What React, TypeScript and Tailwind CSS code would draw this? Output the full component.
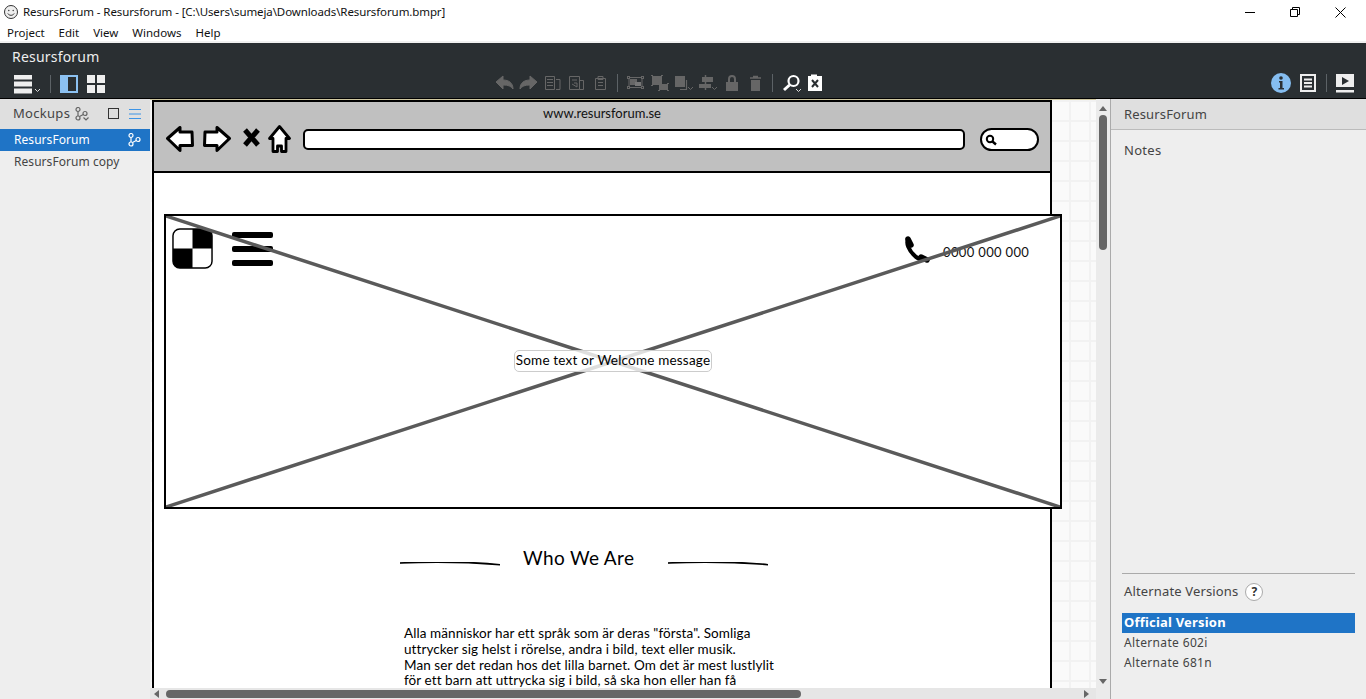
const UI = "font-['Noto_Sans','Open_Sans',sans-serif]";
const SKETCH = "font-['Lato','Open_Sans',sans-serif]";

const Chevron = ({ x, y, c = "#ddd" }: { x: number; y: number; c?: string }) => (
  <path d={`M${x} ${y}l2.5 2.5 2.5-2.5`} stroke={c} fill="none" />
);

const BranchIcon = ({ color, chevron }: { color: string; chevron?: boolean }) => (
  <svg width="14" height="14" viewBox="0 0 14 14" fill="none" stroke={color} strokeWidth="1.2">
    <circle cx="3" cy="2.500" r="2" />
    <circle cx="3" cy="11" r="2" />
    <circle cx="10" cy="6.500" r="2" />
    <path d="M3 4.500v4.500M4.500 9.500l3.800-2" />
    {chevron && <Chevron x={8.500} y={10.500} c={color} />}
  </svg>
);

const Sep = () => <div className="w-px h-[18px] bg-[#5c6266]" />;

const TitleBar = () => (
  <div className="h-6 bg-white flex items-center pl-[3px] pr-5">
    <svg width="16" height="16" viewBox="0 0 16 16" fill="none" stroke="#333">
      <circle cx="8" cy="8" r="6.5" fill="#eee" />
      <circle cx="5.8" cy="6.5" r=".7" fill="#333" stroke="none" />
      <circle cx="10.2" cy="6.5" r=".7" fill="#333" stroke="none" />
      <path d="M4.8 9.5c1.5 2.4 4.9 2.4 6.4 0" />
    </svg>
    <span className={`${UI} ml-1 text-[11.500px] tracking-[-0.1px] text-[#111] whitespace-nowrap`}>
      ResursForum - Resursforum - [C:\Users\sumeja\Downloads\Resursforum.bmpr]
    </span>
    <div className="ml-auto flex items-center gap-[35px]">
      <svg width="10" height="10" viewBox="0 0 10 10" stroke="#000" fill="none"><path d="M0 5.5h10" /></svg>
      <svg width="10" height="10" viewBox="0 0 10 10" stroke="#000" fill="none">
        <path d="M.5 2.5h7v7h-7zM2.5 2.5v-2h7v7h-2" />
      </svg>
      <svg width="11" height="11" viewBox="0 0 11 11" stroke="#000" fill="none"><path d="M.5.5l10 10M10.5.5l-10 10" /></svg>
    </div>
  </div>
);

const MenuBar = () => (
  <div className={`${UI} h-[17px] bg-white flex items-center pl-[7px] gap-[14px] text-[11.500px] text-[#111]`}>
    <span>Project</span>
    <span>Edit</span>
    <span>View</span>
    <span>Windows</span>
    <span>Help</span>
  </div>
);

const Gray = "#666";

const CenterTools = () => (
  <div className="absolute left-[496px] top-[31px] flex items-center h-5">
    <svg width="327" height="20" viewBox="496 74 327 20" fill="none" stroke={Gray}>
      {/* undo, redo */}
      <path d="M496 82l7-6v4c6 0 10 3 10 9-2-3-5-4-10-4v4z" fill={Gray} />
      <path d="M537 82l-7-6v4c-6 0-10 3-10 9 2-3 5-4 10-4v4z" fill={Gray} />
      {/* copy, cut, paste */}
      <path d="M545.500 76.500h9v13h-9zM547 79.500h6M547 82.500h6M547 85.500h6M556 79.500h4v10h-4" />
      <path d="M569.500 76.500h10v13h-10zM579.500 80.500h4v9h-4M572 80h5M572 84l5 3v-4h-3" />
      <path d="M595.500 78.500h10v11h-10zM598 76.500h5v3h-5zM598 82.500h5M598 85.500h5" />
      {/* group */}
      <path d="M629 77.500h13v10h-13z" />
      <rect x="627.500" y="76.500" width="2" height="2" fill="#2a2f32" />
      <rect x="641.500" y="76.500" width="2" height="2" fill="#2a2f32" />
      <rect x="627.500" y="86.500" width="2" height="2" fill="#2a2f32" />
      <rect x="641.500" y="86.500" width="2" height="2" fill="#2a2f32" />
      <rect x="630" y="79" width="7" height="6" fill={Gray} stroke="none" />
      <rect x="635" y="82" width="6" height="4" fill="#777" stroke="none" />
      {/* ungroup */}
      <rect x="652" y="76" width="10" height="9" fill={Gray} stroke="none" />
      <rect x="659" y="84" width="9" height="6" fill={Gray} stroke="none" />
      <path d="M651 75.500h2M661 75.500h2M651 85.500h2M658 90.500h2M667 83.500h2M667 90.500h2" />
      {/* arrange */}
      <rect x="675" y="76" width="10" height="11" fill={Gray} stroke="none" />
      <path d="M686.500 80v9.500H680" strokeWidth="1.200" />
      <Chevron x={688} y={87} c={Gray} />
      {/* align */}
      <path d="M705.500 75v15" strokeWidth="1.500" />
      <rect x="702" y="77" width="11" height="5" fill={Gray} stroke="none" />
      <rect x="699" y="84" width="12" height="4" fill={Gray} stroke="none" />
      <Chevron x={712} y={87} c={Gray} />
      {/* lock, trash */}
      <path d="M729 82v-3c0-4 6-4 6 0v3" strokeWidth="2" />
      <rect x="726" y="82" width="12" height="9" fill={Gray} stroke="none" />
      <path d="M750 78h11M753 76.500h5" strokeWidth="1.500" />
      <path d="M751 80h9v11h-9z" fill={Gray} stroke="none" />
      {/* separators */}
      <path d="M617.500 74v18M772.500 74v18" stroke="#5c6266" />
      {/* search */}
      <circle cx="793.500" cy="81" r="5" stroke="#fff" strokeWidth="2.200" />
      <path d="M789.500 85l-5.500 5" stroke="#fff" strokeWidth="3" />
      <Chevron x={796} y={89} />
      {/* mockup close */}
      <path d="M808 76h3v-1.500h6v1.500h5v15h-14z" fill="#fff" stroke="none" />
      <path d="M812 80l6 7M818 80l-6 7" stroke="#2a2f32" strokeWidth="2" />
    </svg>
  </div>
);

const Toolbar = () => (
  <div className="relative h-[56px] bg-[#2a2f32] border-b border-black">
    <div className={`${UI} pl-3 pt-[3px] text-[14px] leading-[21px] text-[#eee] tracking-[0.2px]`}>Resursforum</div>
    <div className="flex items-center h-[20px] mt-[7px] pl-[14px]">
      <svg width="27" height="19" viewBox="0 0 27 19" className="mr-[9px]">
        <path d="M0 0h18v4.500H0zM0 6.500h18v5H0zM0 13.500h18v5H0z" fill="#eee" />
        <Chevron x={21} y={14} />
      </svg>
      <Sep />
      <svg width="18" height="18" viewBox="0 0 18 18" className="ml-[9px]">
        <path d="M0 0h18v18H0z M8 2v14h8V2z" fillRule="evenodd" fill="#8cc1f1" />
      </svg>
      <svg width="18" height="18" viewBox="0 0 18 18" className="ml-[9px]" fill="#eee">
        <rect width="8" height="8" />
        <rect x="10" width="8" height="8" />
        <rect y="10" width="8" height="8" />
        <rect x="10" y="10" width="8" height="8" />
      </svg>
    </div>
    <CenterTools />
    <div className="absolute right-3 top-[30px] flex items-center">
      <svg width="20" height="20" viewBox="0 0 20 20">
        <circle cx="10" cy="10" r="10" fill="#85bdf0" />
        <circle cx="10" cy="5" r="1.800" fill="#2a2f32" />
        <path d="M8 8h3.500v7H13v1.500H7.500V15H9V9.500H8z" fill="#2a2f32" />
      </svg>
      <svg width="16" height="18" viewBox="0 0 16 18" className="ml-[9px]">
        <path d="M0 0h16v18H0z M2 2v14h12V2z" fillRule="evenodd" fill="#eee" />
        <path d="M4 4.500h8v2H4zM4 8h8v2H4zM4 11.500h8v2H4z" fill="#eee" />
      </svg>
      <div className="w-px h-[18px] bg-[#5c6266] ml-[10px] mr-[9px]" />
      <svg width="18" height="19" viewBox="0 0 18 19">
        <path d="M0 0h18v13H0z" fill="#eee" />
        <path d="M6 3l7 4-7 4z" fill="#2a2f32" />
        <path d="M0 16h18v2.500H0z" fill="#eee" />
      </svg>
    </div>
  </div>
);

const LeftPanel = () => (
  <div className={`${UI} w-[150px] shrink-0 bg-[#eeeeee] text-[12px] tracking-[0.05px]`}>
    <div className="h-[30px] bg-[#dfdfdf] flex items-center pl-[13px] pr-[9px] text-[#444]">
      <span className="text-[13px] tracking-[0.3px]">Mockups</span>
      <div className="ml-[5px]"><BranchIcon color="#666" chevron /></div>
      <svg width="12" height="12" viewBox="0 0 12 12" className="ml-auto mr-[9px]" fill="none" stroke="#333">
        <rect x=".5" y=".5" width="10" height="10" />
      </svg>
      <svg width="12" height="12" viewBox="0 0 12 12" stroke="#3d94e6">
        <path d="M0 1.500h12M0 6h12M0 10.500h12" />
      </svg>
    </div>
    <div className="h-[22px] bg-[#1f74c6] flex items-center pl-[14px] pr-[8px] text-white">
      ResursForum
      <div className="ml-auto"><BranchIcon color="#fff" /></div>
    </div>
    <div className="h-[22px] flex items-center pl-[14px] text-[#444]">ResursForum copy</div>
  </div>
);

const BackArrow = () => (
  <svg width="28" height="26" viewBox="0 0 28 26" fill="#fff" stroke="#000" strokeWidth="3" strokeLinejoin="round">
    <path d="M1.500 12.500L14 1.500v4.500h12l.5 13.500H14v5z" />
  </svg>
);

const ForwardArrow = () => (
  <svg width="28" height="26" viewBox="0 0 28 26" fill="#fff" stroke="#000" strokeWidth="3" strokeLinejoin="round">
    <path d="M26.500 12.500L14 1.500v4.500H2L1.500 19.500H14v5z" />
  </svg>
);

const BrowserBar = () => (
  <div className="h-[71px] bg-[#c0c0c0] border-b-2 border-black">
    <div className={`${SKETCH} pt-[2px] text-center text-[13px] leading-[18px] text-[#111]`}>
      www.resursforum.se
    </div>
    <div className="flex items-center mt-[1px] pl-[12px] h-[32px]">
      <BackArrow />
      <div className="ml-[9px]"><ForwardArrow /></div>
      <svg width="17" height="19" viewBox="0 0 17 19" className="ml-[12px] -mt-[4px]" stroke="#000" strokeWidth="5">
        <path d="M2 2l13 15M15 2L2 17" />
      </svg>
      <svg width="23" height="28" viewBox="0 0 23 28" className="ml-[8px]" fill="#fff" stroke="#000" strokeWidth="2.800" strokeLinejoin="round">
        <path d="M11.500 1.500L21.500 13.500H18V26.500H13.500V21h-4v5.500H5V13.500H1.500z" />
      </svg>
      <div className="ml-[12px] w-[662px] h-[21px] bg-white border-[2.500px] border-black rounded-[5px] mt-[1px]" />
      <div className="ml-[15px] w-[59px] h-[23px] bg-white border-[2.500px] border-black rounded-full flex items-center pl-[3px] mt-[1px]">
        <svg width="12" height="12" viewBox="0 0 12 12" fill="none" stroke="#000">
          <circle cx="5" cy="5" r="3.200" strokeWidth="2" />
          <path d="M7.500 7.500l3.500 3" strokeWidth="2.400" />
        </svg>
      </div>
    </div>
  </div>
);

const Hero = () => (
  <div className="relative mt-[41px] ml-[10px] w-[898px] h-[295px] border-[2.500px] border-black bg-white">
    <div className="flex items-start pt-[12px] pl-[6px]">
      <svg width="41" height="41" viewBox="0 0 42 42">
        <rect x="1" y="1" width="40" height="40" rx="7" fill="#fff" />
        <path d="M21 1h13a7 7 0 0 1 7 7v13H21zM1 21h20v20H8a7 7 0 0 1-7-7z" fill="#000" />
        <rect x="1" y="1" width="40" height="40" rx="7" fill="none" stroke="#000" strokeWidth="1.500" />
      </svg>
      <div className="ml-[19px] mt-[3.500px] w-[41px] flex flex-col gap-[7.500px]">
        <div className="h-[6.500px] bg-black rounded-[2px]" />
        <div className="h-[6.500px] bg-black rounded-[2px]" />
        <div className="h-[6.500px] bg-black rounded-[2px]" />
      </div>
      <svg width="28" height="28" viewBox="0 0 28 28" className="ml-[630px] mt-[8px]" fill="none" stroke="#000">
        <path d="M5 3c-2 4 0 11 8 18 3 2 5 3 8 3" strokeWidth="4" strokeLinecap="round" />
        <path d="M5 3l3 6M18 21l6 3" strokeWidth="5.500" strokeLinecap="round" />
      </svg>
      <span className={`${SKETCH} ml-[12px] mt-[15px] text-[13px] leading-[18px] text-[#111] tracking-[0.35px]`}>0000 000 000</span>
    </div>
    <svg className="absolute inset-0 w-full h-full" viewBox="0 0 893 290" preserveAspectRatio="none" stroke="#5a5a5a" strokeWidth="3.500">
      <path d="M0 0l893 290M893 0L0 290" />
    </svg>
    <div className={`${SKETCH} absolute left-[348px] top-[134px] w-[198px] h-[22px] bg-white/80 border border-[#ccc] rounded-[5px] text-center whitespace-nowrap text-[13.500px] leading-[19px] text-black tracking-[0.2px]`}>
      Some text or Welcome message
    </div>
  </div>
);

const HeadingRule = ({ className }: { className: string }) => (
  <svg width="100" height="5" viewBox="0 0 100 5" className={className}>
    <path d="M0 1.200C30 0 70 .5 100 2.800v-.300C70 -.5 30 -.5 0 .8z" fill="#000" stroke="#000" strokeWidth="1.200" />
  </svg>
);

const Heading = () => (
  <div className="flex items-center ml-[246px] mt-[39px] h-[20px]">
    <HeadingRule className="mt-[12px]" />
    <span className={`${SKETCH} ml-[23px] w-[111px] whitespace-nowrap text-[19px] leading-[20px] text-black tracking-[0.35px]`}>Who We Are</span>
    <HeadingRule className="ml-[34px] mt-[12px]" />
  </div>
);

const Paragraph = () => (
  <div className={`${SKETCH} ml-[250px] mt-[58px] text-[13.500px] leading-[15.800px] text-black tracking-[0.08px] whitespace-pre`}>
    {`Alla människor har ett språk som är deras "första". Somliga
uttrycker sig helst i rörelse, andra i bild, text eller musik.
Man ser det redan hos det lilla barnet. Om det är mest lustlylit
för ett barn att uttrycka sig i bild, så ska hon eller han få`}
  </div>
);

const Canvas = () => (
  <div className="flex flex-col w-[946px] shrink-0">
    <div className="flex-1 min-h-0 overflow-hidden bg-[#fafafa] bg-[linear-gradient(#f2f2f2_2px,transparent_2px),linear-gradient(90deg,#f2f2f2_2px,transparent_2px)] bg-[length:20px_20px] bg-[position:19px_0px] border-t border-[#cfc8a0]">
      <div className="ml-[2px] w-[900px] h-[700px] bg-white border-2 border-black">
        <BrowserBar />
        <Hero />
        <Heading />
        <Paragraph />
      </div>
    </div>
    <div className="h-[11px] bg-[#e6e6e6] flex items-center pl-[4px] pr-[6px]">
      <svg width="6" height="8" viewBox="0 0 6 8" fill="#666"><path d="M5 0v8L0 4z" /></svg>
      <div className="ml-[6px] w-[635px] h-[8px] bg-[#666] rounded-full" />
      <svg width="6" height="8" viewBox="0 0 6 8" fill="#666" className="ml-auto"><path d="M0 0v8l5-4z" /></svg>
    </div>
  </div>
);

const VScroll = () => (
  <div className="w-[14px] shrink-0 bg-[#ebebeb] flex flex-col items-center pt-[7px] pb-[15px] pl-[1px] pr-[1px]">
    <svg width="8" height="5" viewBox="0 0 8 5" fill="#666"><path d="M0 5h8L4 0z" /></svg>
    <div className="mt-[4px] w-[8px] h-[135px] bg-[#666] rounded-full" />
    <svg width="8" height="5" viewBox="0 0 8 5" fill="#666" className="mt-auto"><path d="M0 0h8L4 5z" /></svg>
  </div>
);

const RightPanel = () => (
  <div className={`${UI} flex flex-col flex-1 bg-[#eeeeee] border-l border-[#aaa] text-[#444] text-[12px] tracking-[0.35px]`}>
    <div className="h-[31px] bg-[#dfdfdf] border-b border-[#bbb] flex items-center pl-[13px] pt-[2px] text-[13px] tracking-[0.15px]">ResursForum</div>
    <div className="pl-[13px] mt-[11px] text-[13px] leading-[18px] tracking-[0.3px]">Notes</div>
    <div className="mt-auto mx-[11px] mb-[26px] border-t border-[#aaa]">
      <div className="flex items-center h-[34px] pt-[2px] pl-[2px] text-[13px] tracking-[0.15px]">
        Alternate Versions
        <span className="ml-[7px] w-[18px] h-[18px] rounded-full bg-white border border-[#aaa] text-[#333] text-[12px] font-bold leading-[16px] text-center tracking-normal">?</span>
      </div>
      <div className="mt-[5px] h-[20px] bg-[#1f74c6] text-white font-bold text-[13px] leading-[19px] pl-[2px] tracking-[0.2px]">Official Version</div>
      <div className="h-[20px] leading-[20px] pl-[2px]">Alternate 602i</div>
      <div className="h-[20px] leading-[20px] pl-[2px]">Alternate 681n</div>
    </div>
  </div>
);

export default function App() {
  return (
    <div className="w-[1366px] h-[699px] flex flex-col overflow-hidden bg-white">
      <TitleBar />
      <MenuBar />
      <div className="h-[2px] bg-[#f0f0f0]" />
      <Toolbar />
      <div className="flex flex-1 min-h-0">
        <LeftPanel />
        <Canvas />
        <VScroll />
        <RightPanel />
      </div>
    </div>
  );
}
